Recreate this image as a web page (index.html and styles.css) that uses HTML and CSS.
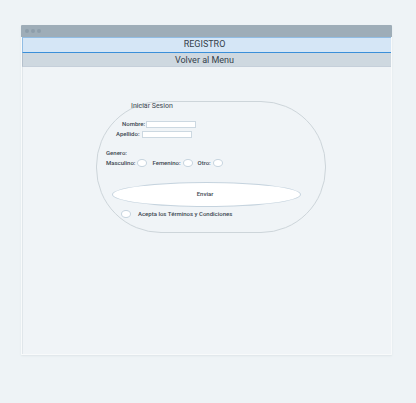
FILE: index.html
```html
<!DOCTYPE html>
<html lang="es">
<head>
<meta charset="utf-8">
<title>Registro</title>
<link rel="stylesheet" href="styles.css">
</head>
<body>
<main class="window">
  <div class="titlebar"><span class="dot"></span><span class="dot"></span><span class="dot"></span></div>
  <h1 class="banner">REGISTRO</h1>
  <a class="back" href="#">Volver al Menu</a>
  <div class="content">
    <form class="form">
      <h2 class="heading">Iniciar Sesion</h2>
      <div class="row row-name"><label for="nombre">Nombre:</label><input class="text" id="nombre" type="text"></div>
      <div class="row row-surname"><label for="apellido">Apellido:</label><input class="text" id="apellido" type="text"></div>
      <fieldset class="gender">
        <legend>Genero:</legend>
        <div class="options">
          <span class="option"><label for="m">Masculino:</label><input class="tick" id="m" type="radio" name="genero"></span>
          <span class="option"><label for="f">Femenino:</label><input class="tick" id="f" type="radio" name="genero"></span>
          <span class="option"><label for="o">Otro:</label><input class="tick" id="o" type="radio" name="genero"></span>
        </div>
      </fieldset>
      <button class="send" type="button">Enviar</button>
      <div class="terms"><input class="tick" id="t" type="checkbox"><label for="t">Acepta los Términos y Condiciones</label></div>
    </form>
  </div>
</main>
</body>
</html>
```
FILE: styles.css
```css
* {
  box-sizing: border-box;
}

body {
  display: flex;
  min-height: 100vh;
  margin: 0;
  padding: 25px 24px 48px 21px;
  background: #eef3f6;
  color: #3b4750;
  font: 500 6px/10px Roboto, sans-serif;
}

.window {
  flex: 1;
  display: flex;
  flex-direction: column;
  border: 1px solid #f8fafb;
  border-top: 0;
  border-radius: 1px;
  background: #f0f4f7;
  box-shadow: 0 1px 2px #dde4e8;
}

.titlebar {
  display: flex;
  align-items: center;
  gap: 2px;
  height: 12px;
  margin: 0 -1px;
  padding-left: 4px;
  border-radius: 1px 1px 0 0;
  background: #9eadb8;
}

.dot {
  width: 4px;
  height: 4px;
  border-radius: 50%;
  background: #8d9dab;
}

.banner,
.back {
  margin: 0;
  padding-right: 5px;
  color: #34414b;
  font-size: 9px;
  font-weight: 400;
  text-align: center;
  text-decoration: none;
}

.banner {
  height: 16px;
  border: 1px solid #91bde4;
  border-right: 0;
  border-bottom-color: #3a8fd9;
  background: #d5e6f6;
  line-height: 12px;
}

.back {
  height: 14px;
  border-left: 1px solid #b4c0cc;
  border-bottom: 1px solid #c5cfda;
  background: #ced8e0;
  line-height: 15px;
}

.content {
  flex: 1;
  padding: 34px 0 0 8px;
  border-left: 1px solid #e0e6ea;
}

.form {
  width: 100%;
  max-width: 230px;
  margin: 0 auto;
  padding: 0 10px 13px 9px;
  border: 1px solid #cdd5da;
  border-radius: 65px;
}

.heading {
  margin: 0 0 8px;
  padding-left: 25px;
  font-size: 7px;
  font-weight: 400;
  line-height: 9px;
}

.row {
  display: flex;
  align-items: center;
}

.row-name {
  gap: 1px;
  padding-left: 16px;
}

.row-surname {
  gap: 3px;
  padding-left: 10px;
}

.text {
  width: 50px;
  height: 7px;
  margin: 0;
  padding: 0 2px;
  border: 1px solid #ccd8e1;
  background: #fff;
  font: inherit;
}

.gender {
  min-width: 0;
  margin: 9px 0 0;
  padding: 0;
  border: 0;
}

.gender legend {
  padding: 0;
}

.options {
  display: flex;
  gap: 5px;
}

.option {
  display: flex;
  align-items: center;
  gap: 2px;
}

.tick {
  appearance: none;
  width: 10px;
  height: 8px;
  margin: 0;
  border: 1px solid #c5d3de;
  border-radius: 50%;
  background: #fff;
}

.tick:checked {
  background: #3a8fd9;
}

.send {
  display: block;
  width: 189px;
  max-width: 100%;
  height: 25px;
  margin: 14px 0 2px 6px;
  padding: 0 3px 2px 0;
  border: 1px solid #c5d3de;
  border-radius: 50%;
  background: #fff;
  color: inherit;
  font: inherit;
}

.terms {
  display: flex;
  align-items: center;
  gap: 7px;
  padding-left: 15px;
}
```
